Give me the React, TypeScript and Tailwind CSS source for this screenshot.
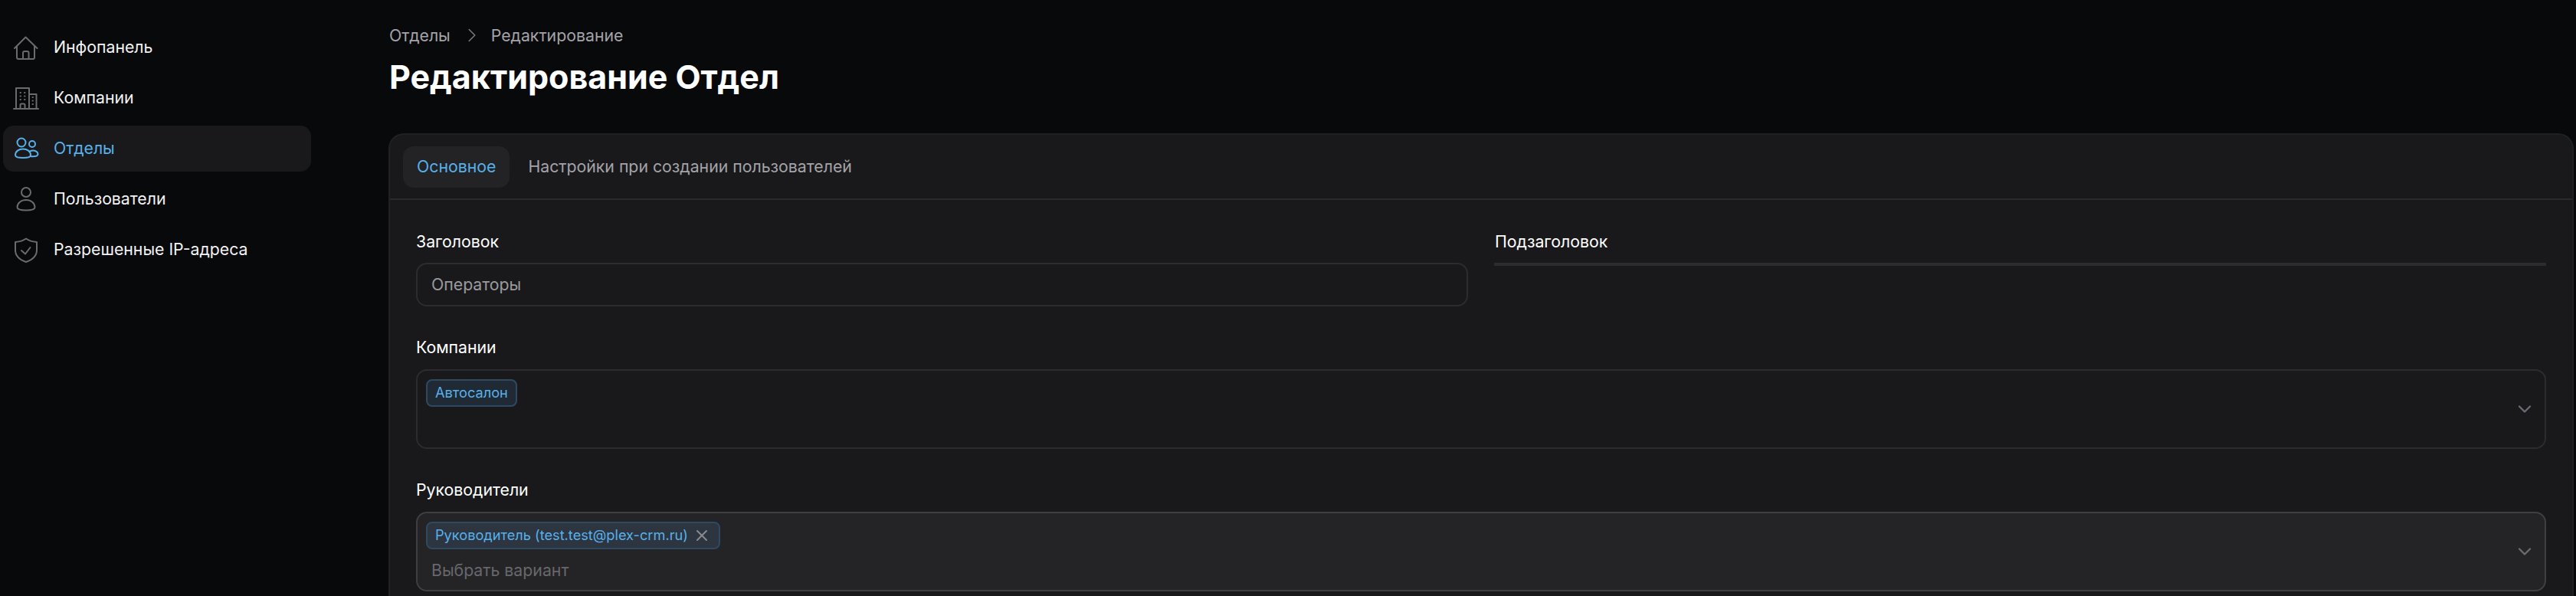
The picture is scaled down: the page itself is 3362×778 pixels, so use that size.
import React from 'react';
import { ChevronDown, ChevronRight, X } from 'lucide-react';

const navIcon = 'w-[34px] h-[34px] shrink-0';

const HomeIcon = () => (
  <svg viewBox="0 0 34 34" fill="none" stroke="currentColor" strokeWidth="2" strokeLinecap="round" strokeLinejoin="round" className={navIcon}>
    <path d="M2 18 16.500 3.500 31.500 18" />
    <path d="M5 15.500V30a2 2 0 0 0 2 2h19a2 2 0 0 0 2-2V15.500" />
    <path d="M13 32v-8a2 2 0 0 1 2-2h3.500a2 2 0 0 1 2 2v8" />
  </svg>
);

const BuildingIcon = () => (
  <svg viewBox="0 0 34 34" fill="none" stroke="currentColor" strokeWidth="2" strokeLinecap="round" strokeLinejoin="round" className={navIcon}>
    <path d="M1 31h32" />
    <path d="M4 31V4h17v27" />
    <path d="M21 12h9.500v19" />
    <path d="M9.500 31v-5a1.500 1.500 0 0 1 1.500-1.500h3a1.500 1.500 0 0 1 1.500 1.500v5" />
    <path d="M9.500 10h.5M15 10h.5M9.500 14.500h.5M15 14.500h.5M9.500 19h.5M15 19h.5M25.500 16h.5M25.500 20.500h.5M25.500 25h.5" />
  </svg>
);

const UsersIcon = () => (
  <svg viewBox="0 0 34 34" fill="none" stroke="currentColor" strokeWidth="2" strokeLinecap="round" strokeLinejoin="round" className={navIcon}>
    <circle cx="11" cy="9" r="5.500" />
    <circle cx="25" cy="11" r="4" />
    <path d="M3 25.500C3 20.500 7.500 17.500 13 17.500s10 3 10 8c0 2.500-4.500 3.500-10 3.500S3 28 3 25.500Z" />
    <path d="M22 20.500c1-.6 2.500-1 4-1 3.500 0 6.500 2 6.500 4.500 0 2.200-3 3.200-6.500 3.200-1 0-2-.1-3-.3" />
  </svg>
);

const UserIcon = () => (
  <svg viewBox="0 0 34 34" fill="none" stroke="currentColor" strokeWidth="2" strokeLinecap="round" strokeLinejoin="round" className={navIcon}>
    <circle cx="17" cy="8" r="6" />
    <path d="M5.500 27.500c0-5.500 5-9.500 11.500-9.500s11.500 4 11.500 9.500c0 2.500-4.500 4-11.500 4s-11.500-1.500-11.500-4Z" />
  </svg>
);

const ShieldIcon = () => (
  <svg viewBox="0 0 34 34" fill="none" stroke="currentColor" strokeWidth="2" strokeLinecap="round" strokeLinejoin="round" className={navIcon}>
    <path d="M17 2.500c3.500 2.500 8 4 14 4.500v10.500c0 7.500-5.500 12.500-14 15.500C8.500 30 3 25 3 17.500V7c6-.5 10.500-2 14-4.500Z" />
    <path d="m11 18 5 4.500 6.500-8.500" />
  </svg>
);

const navItems = [
  { label: 'Инфопанель', icon: <HomeIcon /> },
  { label: 'Компании', icon: <BuildingIcon /> },
  { label: 'Отделы', icon: <UsersIcon />, active: true },
  { label: 'Пользователи', icon: <UserIcon /> },
  { label: 'Разрешенные IP-адреса', icon: <ShieldIcon /> },
];

const Chip: React.FC<{ children: React.ReactNode; hovered?: boolean; onRemove?: boolean }> = ({ children, hovered, onRemove }) => (
  <span className={`inline-flex h-[36px] items-center rounded-[8px] border-2 border-[#2f4a60] pl-[10px] pr-[10px] text-[18.2px] text-[#58b0ea] ${hovered ? 'bg-[#2c3540]' : 'bg-[#202a34]'}`}>
    {children}
    {onRemove && <X className="ml-[6px] w-[24px] h-[24px] text-[#8b8b8f]" strokeWidth={2} />}
  </span>
);

export default function App() {
  return (
    <div className="flex h-screen overflow-hidden bg-[#08090b] font-['Inter',sans-serif] text-[21.25px] text-white">
      <aside className="w-[507px] shrink-0 pl-[4px] pt-[32px]">
        <nav className="flex w-[402px] flex-col gap-[6px]">
          {navItems.map((item) => (
            <div
              key={item.label}
              className={`flex h-[60px] items-center gap-[19px] rounded-[14px] pl-[13px] ${item.active ? 'bg-[#19191b] text-[#58b0ea]' : 'text-[#f2f2f3]'}`}
            >
              <span className={item.active ? 'text-[#58b0ea]' : 'text-[#6b6b6f]'}>{item.icon}</span>
              <span>{item.label}</span>
            </div>
          ))}
        </nav>
      </aside>

      <main className="min-w-0 flex-1 pr-[3px]">
        <div className="flex h-[28px] items-center pl-[1px] mt-[32px] text-[#a3a3a8] leading-[28px]">
          <span>Отделы</span>
          <ChevronRight className="ml-[13px] mr-[10px] w-[30px] h-[30px] text-[#77777c]" strokeWidth={1.3} />
          <span>Редактирование</span>
        </div>
        <h1 className="mt-[14px] pl-[1px] text-[43px] font-bold leading-[52px]">Редактирование Отдел</h1>

        <section className="mt-[48px] rounded-t-[20px] border-2 border-b-0 border-[#212124] bg-[#19191b] h-[620px]">
          <div className="flex h-[85px] items-center gap-[24px] border-b-2 border-[#2a2a2d] pl-[17px]">
            <div className="flex h-[54px] items-center rounded-[14px] bg-[#232325] px-[18px] text-[#58b0ea]">Основное</div>
            <div className="text-[#a3a3a8]">Настройки при создании пользователей</div>
          </div>

          <div className="flex flex-col gap-[39px] pl-[34px] pr-[34px] pt-[40px]">
            <div className="grid grid-cols-2 gap-[34px]">
              <div>
                <label className="block leading-[28px]">Заголовок</label>
                <div className="mt-[14px] flex h-[57px] items-center rounded-[14px] border-2 border-[#2c2c2f] pl-[18px] text-[#9a9a9f]">Операторы</div>
              </div>
              <div>
                <label className="block pl-[1px] leading-[28px]">Подзаголовок</label>
                <div className="mt-[14px] h-[4px] bg-[#2c2c2f]" />
              </div>
            </div>

            <div>
              <label className="block leading-[28px]">Компании</label>
              <div className="mt-[15px] relative h-[104px] rounded-[14px] border-2 border-[#2c2c2f] pl-[11px] pt-[11px]">
                <Chip>Автосалон</Chip>
                <ChevronDown className="absolute right-[12px] top-[36px] w-[28px] h-[28px] text-[#6b6b75]" strokeWidth={2} />
              </div>
            </div>

            <div>
              <label className="block leading-[28px]">Руководители</label>
              <div className="mt-[15px] relative h-[104px] rounded-[14px] border-2 border-[#3f3f42] bg-[#242426] pl-[11px] pt-[11px]">
                <Chip hovered onRemove>Руководитель (test.test@plex-crm.ru)</Chip>
                <div className="mt-[15px] pl-[7px] leading-[24px] text-[#67676c]">Выбрать вариант</div>
                <ChevronDown className="absolute right-[12px] top-[36px] w-[28px] h-[28px] text-[#6b6b75]" strokeWidth={2} />
              </div>
            </div>
          </div>
        </section>
      </main>
    </div>
  );
}
